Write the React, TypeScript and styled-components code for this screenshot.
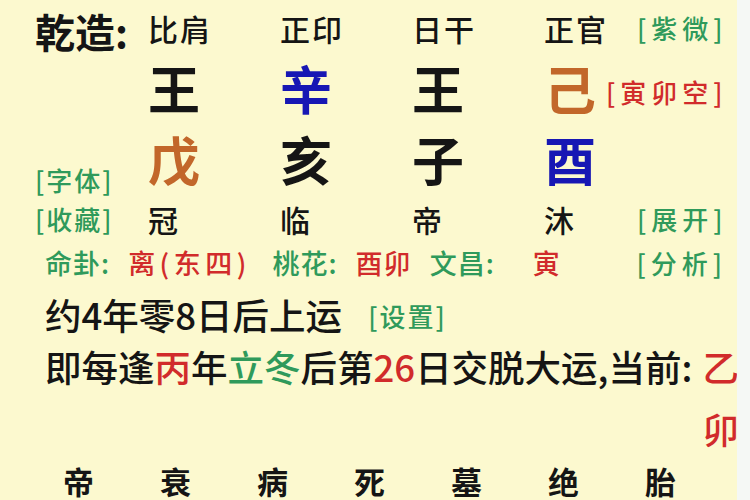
import React from "react";
import styled, { createGlobalStyle } from "styled-components";

type Tone = "ink" | "red" | "green" | "brown" | "blue";

const tones: Record<Tone, string> = {
  ink: "#151515",
  red: "#d12b2b",
  green: "#2f9a5b",
  brown: "#c2672a",
  blue: "#1717b4",
};

const GlobalStyle = createGlobalStyle`
  html, body {
    margin: 0;
    padding: 0;
  }
  body {
    width: 750px;
    height: 500px;
    overflow: hidden;
    background: #f6f8f4;
    font-family: "Noto Sans CJK SC", "Noto Sans", sans-serif;
  }
`;

const Screen = styled.div`
  display: flex;
  width: 750px;
  height: 500px;
`;

const Sheet = styled.div`
  width: 737px;
  height: 500px;
  overflow: hidden;
  box-sizing: border-box;
  padding: 0 10px 0 35px;
  background: #fcf9cf;
  color: ${tones.ink};
`;

const Edge = styled.div`
  flex: 1;
  background: #f5f8f5;
`;

const Chart = styled.div`
  display: grid;
  grid-template-columns: 113px 132px 132px 132px 93px 1fr;
  grid-template-rows: 55px 65px 77px 43px;
  align-items: center;
`;

const Title = styled.div`
  font-size: 40px;
  font-weight: 600;
  line-height: 40px;
  padding-top: 6px;
`;

const God = styled.div`
  font-size: 30px;
  font-weight: 500;
  letter-spacing: 2px;
  line-height: 34px;
`;

const StemCell = styled.div<{ $span?: number }>`
  display: flex;
  align-items: center;
  grid-column: span ${(p) => p.$span ?? 1};
`;

const Stem = styled.span<{ $tone: Tone }>`
  font-size: 52px;
  font-weight: 700;
  line-height: 56px;
  color: ${(p) => tones[p.$tone]};
`;

const Tag = styled.span<{ $tone?: Tone; $wide?: boolean }>`
  font-size: 26px;
  font-weight: 500;
  line-height: 30px;
  letter-spacing: ${(p) => (p.$wide ? "5px" : "2px")};
  color: ${(p) => tones[p.$tone ?? "green"]};
  white-space: nowrap;
`;

const BottomTag = styled(Tag)`
  align-self: end;
  margin-bottom: 2px;
`;

const VoidTag = styled(Tag)`
  margin: 8px 0 0 10px;
`;

const Stage = styled.div`
  font-size: 30px;
  font-weight: 500;
  line-height: 34px;
`;

const InfoLine = styled.div`
  display: flex;
  justify-content: space-between;
  align-items: center;
  height: 45px;
  padding-left: 10px;
`;

const Info = styled.div`
  font-size: 27px;
  font-weight: 500;
  letter-spacing: 1px;
  word-spacing: 11px;
  white-space: nowrap;
`;

const Part = styled.span<{ $tone: Tone; $spread?: number; $lead?: number }>`
  color: ${(p) => tones[p.$tone]};
  letter-spacing: ${(p) => (p.$spread ? `${p.$spread}px` : "inherit")};
  margin-left: ${(p) => p.$lead ?? 0}px;
`;

const LuckLine = styled.div<{ $gap?: number }>`
  margin-top: ${(p) => p.$gap ?? 0}px;
  padding-left: 10px;
  font-size: 36.5px;
  font-weight: 500;
  line-height: 52px;
  white-space: nowrap;
`;

const InlineTag = styled(Tag)`
  margin-left: 26px;
  vertical-align: 3px;
`;

const Current = styled.span`
  display: inline-flex;
  flex-direction: column;
  gap: 10px;
  margin-left: 10px;
  vertical-align: top;
  color: ${tones.red};
`;

const Stages = styled.div`
  display: grid;
  grid-template-columns: repeat(7, 97px);
  padding-top: 8px;
  align-items: center;
`;

const StageName = styled.span`
  padding-left: 28px;
  font-size: 31px;
  font-weight: 700;
  line-height: 36px;
`;

const gods = ["比肩", "正印", "日干", "正官"];
const stems: [string, Tone][] = [
  ["王", "ink"],
  ["辛", "blue"],
  ["王", "ink"],
  ["己", "brown"],
];
const branches: [string, Tone][] = [
  ["戊", "brown"],
  ["亥", "ink"],
  ["子", "ink"],
  ["酉", "blue"],
];
const growth = ["冠", "临", "帝", "沐"];
const cycle = ["帝", "衰", "病", "死", "墓", "绝", "胎"];

export default function App() {
  return (
    <>
      <GlobalStyle />
      <Screen>
        <Sheet>
          <Chart>
            <Title>乾造:</Title>
            {gods.map((g) => (
              <God key={g}>{g}</God>
            ))}
            <Tag $wide>[紫微]</Tag>

            <span />
            {stems.map(([s, tone], i) => (
              <StemCell key={i} $span={i === 3 ? 2 : 1}>
                <Stem $tone={tone}>{s}</Stem>
                {i === 3 && (
                  <VoidTag $tone="red" $wide>
                    [寅卯空]
                  </VoidTag>
                )}
              </StemCell>
            ))}

            <BottomTag>[字体]</BottomTag>
            {branches.map(([b, tone], i) => (
              <StemCell key={i}>
                <Stem $tone={tone}>{b}</Stem>
              </StemCell>
            ))}
            <span />

            <Tag>[收藏]</Tag>
            {growth.map((g) => (
              <Stage key={g}>{g}</Stage>
            ))}
            <Tag $wide>[展开]</Tag>
          </Chart>

          <InfoLine>
            <Info>
              <Part $tone="green">命卦: </Part>
              <Part $tone="red" $spread={4.5}>离(东四) </Part>
              <Part $tone="green">桃花: </Part>
              <Part $tone="red">酉卯 </Part>
              <Part $tone="green">文昌: </Part>
              <Part $tone="red" $lead={20}>寅</Part>
            </Info>
            <Tag $wide>[分析]</Tag>
          </InfoLine>

          <LuckLine $gap={4}>
            约4年零8日后上运
            <InlineTag>[设置]</InlineTag>
          </LuckLine>

          <LuckLine>
            即每逢<Part $tone="red">丙</Part>年<Part $tone="green">立冬</Part>后第
            <Part $tone="red">26</Part>日交脱大运,当前:
            <Current>
              <span>乙</span>
              <span>卯</span>
            </Current>
          </LuckLine>

          <Stages>
            {cycle.map((c) => (
              <StageName key={c}>{c}</StageName>
            ))}
          </Stages>
        </Sheet>
        <Edge />
      </Screen>
    </>
  );
}
